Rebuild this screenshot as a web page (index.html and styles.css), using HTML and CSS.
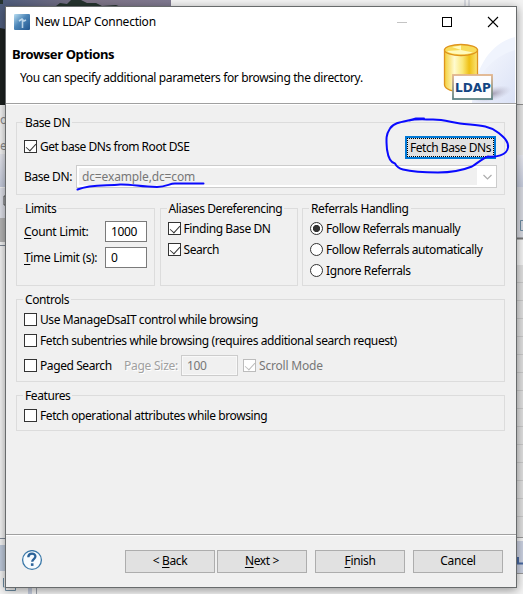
FILE: index.html
```
<!DOCTYPE html>
<html lang="en">
<head>
<meta charset="utf-8">
<title>New LDAP Connection</title>
<link rel="stylesheet" href="styles.css">
</head>
<body>
<svg class="backdrop" width="523" height="594" viewBox="0 0 523 594" aria-hidden="true">
  <defs>
    <linearGradient id="sky" x1="0" y1="0" x2="1" y2="0"><stop offset="0" stop-color="#4d5c7c"/><stop offset=".5" stop-color="#7d7386"/><stop offset="1" stop-color="#807a91"/></linearGradient>
    <linearGradient id="bar" x1="0" y1="0" x2="0" y2="1"><stop offset="0" stop-color="#e6e7ee"/><stop offset="1" stop-color="#c4cadb"/></linearGradient>
  </defs>
  <rect width="523" height="594" fill="#f3f3f3"/>
  <rect width="171" height="105" fill="url(#sky)"/>
  <path d="M0 28l5 1v76H0z" fill="#1c211f"/>
  <path d="M0 0h3v4H0zM56 6l4-3 7 1 4-4h10l6 3h9l6 3 14-1 5 2H56z" fill="#26342f"/>
  <path d="M465 0v6M469 0v6" stroke="#b9bdc9"/>
  <rect x="0" y="154" width="6" height="33" fill="url(#bar)"/>
  <rect x="0" y="188" width="6" height="30" fill="#dfe1e9"/>
  <rect x="0" y="218" width="6" height="24" fill="#b5b5b5"/>
  <path d="M0 245.500h6M0 538.500h6" stroke="#7d8795"/>
  <path d="M6 196H4v9h2M6 553H4v9h2" fill="none" stroke="#555"/>
  <rect x="0" y="545" width="6" height="26" fill="#bdc9da"/>
  <rect x="516" y="105" width="7" height="50" fill="#e4e4e4"/>
  <path d="M516 104.500h7" stroke="#8e8e8e"/>
  <rect x="516" y="155" width="7" height="32" fill="url(#bar)"/>
  <rect x="516" y="187" width="7" height="51" fill="#d6d8df"/>
  <path d="M523 220.500h-2.500v10h2.500" fill="none" stroke="#6c8ba1"/>
  <path d="M516 238.500h7" stroke="#777" stroke-width="2"/>
  <rect x="516" y="265" width="7" height="273" fill="#dedede"/>
  <path d="M516 282.500h7m-7 18h7m-7 18h7m-7 18h7m-7 18h7m-7 18h7m-7 18h7m-7 18h7m-7 18h7m-7 18h7m-7 18h7m-7 18h7m-7 18h7m-7 18h7" stroke="#c8c8c8"/>
  <rect x="516" y="541" width="7" height="32" fill="#c9cfdf"/>
  <path d="M516 537.500h7M516 573.500h7" stroke="#999"/>
  <path d="M517 563.500h6M518 557v6" stroke="#4868a0" stroke-width="2"/>
  <rect x="28" y="588" width="4" height="6" fill="#c3cbdc"/>
  <path d="M36.500 588v6" stroke="#9aa0aa"/>
  <path d="M3.500 578v9h1M5.500 588v2.500h10V588" fill="none" stroke="#6c8ba1"/>
</svg>
<div class="peek"><span>o</span><span>e</span></div>

<main class="dialog">
  <header class="banner">
    <div class="titlebar">
      <svg class="app-icon" width="16" height="16" viewBox="0 0 16 16"><defs><linearGradient id="app" x1="0" y1="0" x2="1" y2="1"><stop offset="0" stop-color="#b9def2"/><stop offset=".45" stop-color="#4d86b8"/><stop offset="1" stop-color="#20558e"/></linearGradient></defs><rect width="16" height="16" rx="1" fill="url(#app)"/><path d="M8.500 14V6M5 7l3-2 2 2 2-1" stroke="#e2f0fa" stroke-width="1.600" fill="none" opacity=".75"/></svg>
      <span class="window-title">New LDAP Connection</span>
      <svg class="window-buttons" width="102" height="12" viewBox="0 0 102 12" fill="none"><path d="M0 6.500h10" stroke="#c4c4c4"/><rect x="45.500" y="1.500" width="9" height="9" stroke="#000"/><path d="M91 1l10 10M101 1L91 11" stroke="#000" stroke-width="1.100"/></svg>
    </div>
    <h1>Browser Options</h1>
    <p>You can specify additional parameters for browsing the directory.</p>
    <svg class="ldap-art" width="75" height="74" viewBox="440 29 75 74">
      <defs>
        <linearGradient id="gold" x1="0" y1="0" x2="1" y2="0"><stop offset="0" stop-color="#f4cf3a"/><stop offset=".3" stop-color="#fffbd0"/><stop offset=".55" stop-color="#fae776"/><stop offset=".75" stop-color="#efbf14"/><stop offset="1" stop-color="#fbe67b"/></linearGradient>
        <linearGradient id="swoosh" x1="0" y1="0" x2="1" y2="1"><stop offset="0" stop-color="#f7f9fe"/><stop offset="1" stop-color="#dbe2f6"/></linearGradient>
        <linearGradient id="frame" x1="0" y1="0" x2="0" y2="1"><stop offset="0" stop-color="#e2b58c"/><stop offset="1" stop-color="#5d8385"/></linearGradient>
        <radialGradient id="shade"><stop offset="0" stop-color="#8b8299" stop-opacity=".75"/><stop offset="1" stop-color="#b9b7c8" stop-opacity="0"/></radialGradient>
      </defs>
      <path d="M472 103c2-34 18-60 43-66v66z" fill="#f0f4fd"/>
      <path d="M472 103c4-28 19-46 43-53v53z" fill="url(#swoosh)"/>
      <ellipse cx="492" cy="94" rx="20" ry="7" fill="url(#shade)" transform="rotate(-15 492 94)"/>
      <path d="M444.500 50v35c1 9 32 9 33 0V50z" fill="url(#gold)" stroke="#df941d" stroke-width="1.300"/>
      <ellipse cx="461" cy="50" rx="16.500" ry="5.500" fill="#f8dc5a" stroke="#df941d" stroke-width="1.300"/>
      <path d="M447 51l14-1-9-3 9-1.500v4.500l12 2.500c-8 3-22 2-26-1.500z" fill="#fffabd"/>
      <rect x="453" y="75" width="39" height="24" fill="#fdfdfe" stroke="url(#frame)" stroke-width="1.800"/>
      <text x="455" y="92" textLength="36" lengthAdjust="spacingAndGlyphs" class="ldap-text">LDAP</text>
    </svg>
  </header>

  <div class="content">
    <section class="group base">
      <h2>Base DN</h2>
      <div class="base-top"><label class="check"><i class="box on"></i><span>Get base DNs from Root DSE</span></label><button class="button focused"><span>Fetch Base DNs</span></button></div>
      <div class="base-bottom"><span>Base DN:</span><div class="combo"><span>dc=example,dc=com</span><svg width="9" height="6" viewBox="0 0 9 6"><path d="M.5 1l4 4 4-4" fill="none" stroke="#adadad" stroke-width="1.200"/></svg></div></div>
    </section>

    <div class="trio">
      <section class="group limits">
        <h2>Limits</h2>
        <div class="field"><span><u>C</u>ount Limit:</span><div class="input">1000</div></div>
        <div class="field"><span><u>T</u>ime Limit (s):</span><div class="input">0</div></div>
      </section>
      <section class="group options">
        <h2>Aliases Dereferencing</h2>
        <label class="check"><i class="box on"></i><span>Finding Base DN</span></label>
        <label class="check"><i class="box on"></i><span>Search</span></label>
      </section>
      <section class="group options">
        <h2>Referrals Handling</h2>
        <label class="check"><i class="radio on"></i><span>Follow Referrals manually</span></label>
        <label class="check"><i class="radio"></i><span>Follow Referrals automatically</span></label>
        <label class="check"><i class="radio"></i><span>Ignore Referrals</span></label>
      </section>
    </div>

    <section class="group controls">
      <h2>Controls</h2>
      <label class="check"><i class="box"></i><span>Use ManageDsaIT control while browsing</span></label>
      <label class="check"><i class="box"></i><span>Fetch subentries while browsing (requires additional search request)</span></label>
      <div class="paged">
        <label class="check"><i class="box"></i><span>Paged Search</span></label>
        <span class="page-label">Page Size:</span>
        <div class="input disabled">100</div>
        <label class="check muted"><i class="box on"></i><span>Scroll Mode</span></label>
      </div>
    </section>

    <section class="group features">
      <h2>Features</h2>
      <label class="check"><i class="box"></i><span>Fetch operational attributes while browsing</span></label>
    </section>
  </div>

  <footer>
    <svg class="help" width="22" height="22" viewBox="0 0 22 22"><circle cx="11" cy="10" r="9.400" fill="#f7fbfe" stroke="#3a78a8" stroke-width="1.300"/><path d="M7.300 7.200C7.300 2.400 14.700 2.600 14.400 6.700c-.2 2.300-3.200 2.500-3.200 5" fill="none" stroke="#2b6399" stroke-width="2.300"/><rect x="9.900" y="13.300" width="2.600" height="2.600" fill="#2b6399"/></svg>
    <button class="button"><span>&lt; <u>B</u>ack</span></button>
    <button class="button next"><span><u>N</u>ext &gt;</span></button>
    <button class="button"><span><u>F</u>inish</span></button>
    <button class="button"><span>Cancel</span></button>
  </footer>
</main>

<svg class="ink" width="523" height="594" viewBox="0 0 523 594" fill="none" stroke="#0a0aff" stroke-width="2" stroke-linecap="round" stroke-linejoin="round" aria-hidden="true">
  <path d="M77.500 189.500C91 184 107 186 120 184.500c12-.4 21 2.500 37 2.500 10 0 12-3.500 18-3.500h28.500"/>
  <path d="M409 120.500c7-2 16-1 24-1 12 0 18 3 27 4 15 2 28 1 38 9 6 5 11 9 10 15-1 8-13 10-20 9-6 2-11 7-16 10-10 4-20 6-34 6-14 0-23 0-35-3-4-1-6-2-8-6-5-1-7-7-8-14-1-11-1-15 3-21 4-7 17-7 26-10h8"/>
</svg>
</body>
</html>
```

FILE: styles.css
```
* { box-sizing: border-box; }

body {
  margin: 0;
  width: 523px;
  height: 594px;
  overflow: hidden;
  position: relative;
  font: 12px/16px "Noto Sans", "Open Sans", sans-serif;
  letter-spacing: -0.41px;
  color: #000;
}

.backdrop, .ink { position: absolute; left: 0; top: 0; }
.ink { pointer-events: none; }

.peek {
  position: absolute;
  left: 0;
  top: 112px;
  width: 6px;
  display: grid;
  row-gap: 10px;
  color: #888;
}

.dialog {
  position: relative;
  display: flex;
  flex-direction: column;
  width: 512px;
  height: 582px;
  margin: 6px 0 0 5px;
  border: 1px solid #686b6c;
  background: #f0f0f0;
  box-shadow: 0 2px 9px rgba(0, 0, 0, 0.4);
}

.banner {
  position: relative;
  flex: none;
  height: 98px;
  background: #fff;
  border-bottom: 1px solid #fff;
  box-shadow: inset 0 -1px #a0a0a0;
}

.titlebar {
  display: flex;
  align-items: center;
  height: 29px;
  padding: 0 17px 0 8px;
}

.window-title { margin-left: 5px; letter-spacing: -0.24px; }
.window-buttons { margin-left: auto; }

h1 {
  margin: 10px 0 0 6px;
  font-size: 13px;
  line-height: 16px;
  font-weight: 700;
  letter-spacing: -0.37px;
}

.banner p { margin: 8px 0 0 14px; letter-spacing: -0.37px; }
.ldap-art { position: absolute; right: 1px; top: 22px; }
.ldap-text { font: bold 12px "DejaVu Sans", sans-serif; letter-spacing: 0; fill: #134583; }

.content { flex: 1; padding: 17px 11px 0 10px; }

.group { height: 73px; border: 1px solid #dcdcdc; }

h2 {
  width: max-content;
  height: 16px;
  margin: -8px 0 0 6px;
  padding: 0 2px;
  background: #f0f0f0;
  font-size: 12px;
  line-height: 16px;
  font-weight: 400;
}

.check { display: flex; align-items: center; height: 21px; gap: 3px; white-space: nowrap; }

.box, .radio { flex: none; width: 13px; height: 13px; border: 1px solid #333; background: #fff; }

.box.on::after {
  content: "";
  display: block;
  width: 9px;
  height: 5px;
  margin: 2px 0 0 1px;
  border: solid #333;
  border-width: 0 0 1.500px 1.500px;
  transform: rotate(-48deg) scale(0.95);
}

.radio { border-radius: 50%; }
.radio.on { background: radial-gradient(circle, #333 0 3.300px, #fff 3.900px); }

.base-top { display: flex; justify-content: space-between; align-items: center; height: 23px; margin: 5px 8px 0 7px; }
.base-top .check { margin-bottom: 2px; letter-spacing: -0.46px; }

.button {
  flex: none;
  width: 90px;
  height: 23px;
  padding: 0;
  border: 1px solid #adadad;
  background: #e1e1e1;
  font: inherit;
  letter-spacing: -0.35px;
  color: inherit;
}

.focused { width: 91px; border: 2px solid #0078d7; outline: 1px dotted #000; outline-offset: -3px; white-space: nowrap; letter-spacing: -0.45px; }

.base-bottom { display: flex; align-items: center; height: 23px; margin: 6px 7px 0; }

.combo {
  display: flex;
  align-items: center;
  justify-content: space-between;
  width: 421px;
  height: 23px;
  margin-left: auto;
  padding: 0 4px 0 5px;
  border: 1px solid #ccc;
  background: linear-gradient(#f0f0f0, #f0f0f0) 2px 2px / 398px 17px no-repeat #fff;
  color: #777;
  letter-spacing: -0.14px;
}

.trio { display: grid; grid-template-columns: 139px 138px 203px; justify-content: space-between; margin-top: 13px; }
.trio .group { height: 78px; }

.field { display: flex; align-items: center; justify-content: space-between; height: 21px; margin: 5px 7px 0; letter-spacing: -0.33px; }
.limits h2 + .field { margin-top: 4px; }

.input { width: 42px; height: 21px; padding: 1px 5px; border: 1px solid #7a7a7a; background: #fff; line-height: 17px; }

.options .check, .controls .check, .features .check { margin-left: 7px; }
.options h2 + .check { margin-top: 1px; }

.controls { height: 83px; margin-top: 13px; }
.controls h2 + .check { margin-top: 1px; }
.paged { display: flex; align-items: center; height: 21px; margin-top: 4px; }
.controls .paged > .check:first-child { width: 88px; }
.page-label { flex: none; width: 50px; margin-left: 12px; color: #a0a0a0; text-shadow: 1px 1px #fff; white-space: nowrap; letter-spacing: -0.25px; }
.disabled { flex: none; width: 57px; margin-left: 7px; border-color: #ccc; background: #f0f0f0; box-shadow: inset 0 0 0 1px #f8f8f8; color: #777; }
.controls .paged .muted { margin-left: 5px; color: #777; letter-spacing: -0.2px; }
.muted .box { border-color: #bcbcbc; }
.muted .box::after { border-color: #bcbcbc; }

.features { height: 36px; margin-top: 13px; }
.features h2 + .check { margin-top: 1px; }

footer {
  display: flex;
  flex: none;
  align-items: center;
  height: 53px;
  padding: 0 13px 0 15px;
  border-top: 1px solid #a0a0a0;
  box-shadow: inset 0 1px #fff;
}

.help { margin-right: auto; }
footer .button + .button { margin-left: 8px; }
footer .button.next { margin-left: 2px; }

u { text-decoration-thickness: 1px; text-underline-offset: 2px; }
```
